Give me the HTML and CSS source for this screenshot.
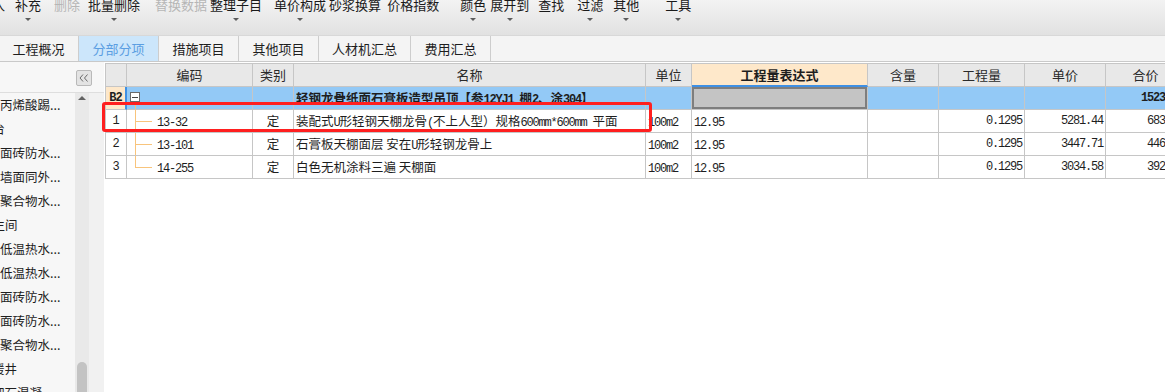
FILE: index.html
```html
<!DOCTYPE html>
<html lang="zh-CN">
<head>
    <meta charset="UTF-8">
    <title>分部分项</title>
    <link rel="stylesheet" href="styles.css">
</head>
<body>
    <div class="toolbar">
        <div class="tb-item"><span class="tb-label">入</span></div>
        <div class="tb-item"><span class="tb-label">补充</span><i class="tb-arrow"></i></div>
        <div class="tb-item disabled"><span class="tb-label">删除</span></div>
        <div class="tb-item"><span class="tb-label">批量删除</span><i class="tb-arrow"></i></div>
        <div class="tb-item disabled"><span class="tb-label">替换数据</span></div>
        <div class="tb-item"><span class="tb-label">整理子目</span><i class="tb-arrow"></i></div>
        <div class="tb-item"><span class="tb-label">单价构成</span><i class="tb-arrow"></i></div>
        <div class="tb-item"><span class="tb-label">砂浆换算</span></div>
        <div class="tb-item"><span class="tb-label">价格指数</span></div>
        <div class="tb-item"><span class="tb-label">颜色</span><i class="tb-arrow"></i></div>
        <div class="tb-item"><span class="tb-label">展开到</span><i class="tb-arrow"></i></div>
        <div class="tb-item"><span class="tb-label">查找</span></div>
        <div class="tb-item"><span class="tb-label">过滤</span><i class="tb-arrow"></i></div>
        <div class="tb-item"><span class="tb-label">其他</span><i class="tb-arrow"></i></div>
        <div class="tb-item"><span class="tb-label">工具</span><i class="tb-arrow"></i></div>
    </div>

    <div class="tabs">
        <div class="tab">工程概况</div>
        <div class="tab active">分部分项</div>
        <div class="tab">措施项目</div>
        <div class="tab">其他项目</div>
        <div class="tab wide">人材机汇总</div>
        <div class="tab">费用汇总</div>
    </div>

    <div class="main">
        <div class="side">
            <div class="side-head">
                <div class="collapse-btn">
                    <svg width="10" height="8" viewBox="0 0 10 8">
                        <path d="M4 0.5 L1 4 L4 7.5 M8.5 0.5 L5.5 4 L8.5 7.5" fill="none" stroke="#6a6a6a" stroke-width="1"/>
                    </svg>
                </div>
            </div>
            <div class="side-body">
                <div class="tree-list">
                    <div class="node">丙烯酸踢...</div>
                    <div class="node cut-2">阳台</div>
                    <div class="node">面砖防水...</div>
                    <div class="node">墙面同外...</div>
                    <div class="node">聚合物水...</div>
                    <div class="node cut-2">卫生间</div>
                    <div class="node">低温热水...</div>
                    <div class="node">低温热水...</div>
                    <div class="node">面砖防水...</div>
                    <div class="node">面砖防水...</div>
                    <div class="node">聚合物水...</div>
                    <div class="node cut-1">暖井</div>
                    <div class="node cut-1">细石混凝...</div>
                </div>
                <div class="vscroll">
                    <i class="vscroll-up"></i>
                    <div class="vscroll-thumb"></div>
                </div>
                <div class="splitter"></div>
            </div>
        </div>

        <div class="grid-wrap">
            <div class="grid">
                <!-- header -->
                <div class="cell head"></div>
                <div class="cell head">编码</div>
                <div class="cell head">类别</div>
                <div class="cell head">名称</div>
                <div class="cell head">单位</div>
                <div class="cell head expr-head">工程量表达式</div>
                <div class="cell head">含量</div>
                <div class="cell head">工程量</div>
                <div class="cell head">单价</div>
                <div class="cell head">合价</div>

                <!-- section row -->
                <div class="cell rownum section-num">B2</div>
                <div class="cell section code-root"><span class="fold-box"></span></div>
                <div class="cell section"></div>
                <div class="cell section name bold">轻钢龙骨纸面石膏板造型吊顶【参<span class="en">12YJ1 </span>棚<span class="en">2</span>、涂<span class="en">304</span>】</div>
                <div class="cell section"></div>
                <div class="cell section expr-selected"></div>
                <div class="cell section"></div>
                <div class="cell section"></div>
                <div class="cell section"></div>
                <div class="cell section num bold">1523.41</div>

                <!-- item rows -->
                <div class="cell rownum">1</div>
                <div class="cell code branch"><span class="en">13-32</span></div>
                <div class="cell type">定</div>
                <div class="cell name">装配式<span class="en">U</span>形轻钢天棚龙骨<span class="en">(</span>不上人型）规格<span class="en">600mm*600mm </span>平面</div>
                <div class="cell unit"><span class="en">100m2</span></div>
                <div class="cell expr"><span class="en">12.95</span></div>
                <div class="cell"></div>
                <div class="cell num">0.1295</div>
                <div class="cell num">5281.44</div>
                <div class="cell num">683.95</div>

                <div class="cell rownum">2</div>
                <div class="cell code branch"><span class="en">13-101</span></div>
                <div class="cell type">定</div>
                <div class="cell name">石膏板天棚面层 安在<span class="en">U</span>形轻钢龙骨上</div>
                <div class="cell unit"><span class="en">100m2</span></div>
                <div class="cell expr"><span class="en">12.95</span></div>
                <div class="cell"></div>
                <div class="cell num">0.1295</div>
                <div class="cell num">3447.71</div>
                <div class="cell num">446.48</div>

                <div class="cell rownum">3</div>
                <div class="cell code branch last"><span class="en">14-255</span></div>
                <div class="cell type">定</div>
                <div class="cell name">白色无机涂料三遍 天棚面</div>
                <div class="cell unit"><span class="en">100m2</span></div>
                <div class="cell expr"><span class="en">12.95</span></div>
                <div class="cell"></div>
                <div class="cell num">0.1295</div>
                <div class="cell num">3034.58</div>
                <div class="cell num">392.98</div>
            </div>
        </div>

        <!-- red annotation box -->
        <div class="mark"></div>
    </div>
</body>
</html>
```

FILE: styles.css
```css
* {
    box-sizing: border-box;
}

body {
    margin: 0;
    width: 1165px;
    height: 392px;
    overflow: hidden;
    font-family: "Noto Sans CJK SC", "Microsoft YaHei", sans-serif;
    font-size: 13px;
    color: #1e1e1e;
    background-color: #fff;
}

/* toolbar */
.toolbar {
    display: flex;
    align-items: flex-start;
    height: 35px;
    background: linear-gradient(#f3f3f3, #e1e1e1);
    overflow: hidden;
}

.tb-item {
    display: flex;
    flex-direction: column;
    align-items: center;
    flex-shrink: 0;
}

.tb-label {
    margin-top: -3px;
    line-height: 16px;
    white-space: nowrap;
    color: #1a1a1a;
}

.tb-item.disabled .tb-label {
    color: #b6b6b6;
}

.tb-arrow {
    margin-top: 5px;
    border-left: 3.5px solid transparent;
    border-right: 3.5px solid transparent;
    border-top: 3.5px solid #5c5c5c;
}

.tb-item:nth-child(1) { margin-left: -8px; }
.tb-item:nth-child(2) { margin-left: 10px; }
.tb-item:nth-child(3) { margin-left: 13px; }
.tb-item:nth-child(4) { margin-left: 8px; }
.tb-item:nth-child(5) { margin-left: 15px; }
.tb-item:nth-child(6) { margin-left: 3px; }
.tb-item:nth-child(7) { margin-left: 12px; }
.tb-item:nth-child(8) { margin-left: 3px; }
.tb-item:nth-child(9) { margin-left: 6px; }
.tb-item:nth-child(10) { margin-left: 21px; }
.tb-item:nth-child(11) { margin-left: 4px; }
.tb-item:nth-child(12) { margin-left: 9px; }
.tb-item:nth-child(13) { margin-left: 13px; }
.tb-item:nth-child(14) { margin-left: 10px; }
.tb-item:nth-child(15) { margin-left: 26px; }

/* tabs */
.tabs {
    display: flex;
    height: 27px;
    margin-left: -1px;
    background-color: #f4f4f4;
    border-top: 1px solid #d8d8d8;
    border-bottom: 1px solid #c9c9c9;
}

.tab {
    width: 80px;
    border-right: 1px solid #cdcdcd;
    text-align: center;
    line-height: 26px;
    color: #1e1e1e;
}

.tab.wide {
    width: 92px;
}

.tab.active {
    background-color: #cce6fb;
    color: #5b9ee2;
}

/* main area */
.main {
    position: relative;
    display: flex;
    height: 330px;
}

.side {
    display: flex;
    flex-direction: column;
    width: 104px;
    flex-shrink: 0;
    background-color: #f7f7f7;
}

.side-head {
    display: flex;
    justify-content: flex-end;
    height: 31px;
    padding: 8px 12px 0 0;
    border-bottom: 1px solid #dedede;
}

.collapse-btn {
    display: flex;
    align-items: center;
    justify-content: center;
    width: 16px;
    height: 16px;
    background-color: #e3e3e3;
    border: 1px solid #b9b9b9;
    border-radius: 2px;
}

.side-body {
    display: flex;
    flex: 1;
    overflow: hidden;
}

.tree-list {
    width: 75px;
    overflow: hidden;
}

.node {
    height: 24px;
    line-height: 24px;
    white-space: nowrap;
    font-size: 12.5px;
    color: #1e1e1e;
}

.node.cut-1 {
    text-indent: -8px;
}

.node.cut-2 {
    text-indent: -20px;
}

.vscroll {
    display: flex;
    flex-direction: column;
    align-items: center;
    width: 14px;
    background-color: #e9e9e9;
}

.vscroll-up {
    margin-top: 3px;
    border-left: 4px solid transparent;
    border-right: 4px solid transparent;
    border-bottom: 4px solid #626262;
}

.vscroll-thumb {
    width: 10px;
    height: 40px;
    margin-top: auto;
    margin-bottom: -10px;
    background-color: #c3c3c3;
    border-radius: 5px;
}

.splitter {
    width: 15px;
    background-color: #f1f1f1;
}

/* data grid */
.grid-wrap {
    flex: 1;
    padding: 1px 0 0 1px;
    overflow: hidden;
    background-color: #fff;
}

.grid {
    display: grid;
    grid-template-columns: 21px 126px 41px 352px 46px 176px 71px 86px 81px 80px;
    grid-auto-rows: 23px;
    width: 1081px;
    border-top: 1px solid #c6c6c6;
    border-left: 1px solid #c6c6c6;
    font-size: 12.5px;
}

.cell {
    padding: 0 3px;
    border-right: 1px solid #c6c6c6;
    border-bottom: 1px solid #c6c6c6;
    line-height: 22px;
    white-space: nowrap;
    overflow: hidden;
}

.head {
    background-color: #e8e8e8;
    text-align: center;
    font-size: 13px;
    color: #2a2a2a;
}

.expr-head {
    background-color: #fee8ca;
    border-bottom: 2px solid #3f90e4;
    font-weight: bold;
    color: #1e1e1e;
}

.en {
    font-family: "Liberation Mono", monospace;
    font-size: 12px;
    letter-spacing: -1.2px;
}

.rownum {
    text-align: center;
    font-family: "Liberation Mono", monospace;
    font-size: 12px;
}

.section {
    background-color: #93c9f6;
}

.section-num {
    background-color: #fee8ca;
    border-right: 2px solid #3f90e4;
    font-weight: bold;
    letter-spacing: -1px;
}

.bold {
    font-weight: bold;
}

.name {
    padding-left: 2px;
}

.type {
    text-align: center;
}

.unit {
    padding-left: 2px;
}

.expr {
    padding-left: 2px;
}

.num {
    text-align: right;
    font-family: "Liberation Mono", monospace;
    font-size: 12px;
    letter-spacing: -1.2px;
    padding-right: 2px;
}

.expr-selected {
    background-color: #c4c4c4;
    box-shadow: inset 0 0 0 2px #7e7e7e;
}

/* tree lines in the code column */
.code-root {
    position: relative;
    padding-left: 3px;
}

.fold-box {
    display: inline-block;
    width: 10px;
    height: 10px;
    margin-top: 5px;
    vertical-align: top;
    background: linear-gradient(#444, #444) center / 6px 1px no-repeat, #fff;
    border: 1px solid #6a6a6a;
}

.code-root::after {
    content: "";
    position: absolute;
    left: 8px;
    top: 15px;
    bottom: -1px;
    width: 1px;
    background-color: #f8c47c;
}

.branch {
    position: relative;
    padding-left: 30px;
}

.branch::before {
    content: "";
    position: absolute;
    left: 8px;
    top: 0;
    bottom: -1px;
    width: 1px;
    background-color: #f8c47c;
}

.branch.last::before {
    bottom: 50%;
}

.branch::after {
    content: "";
    position: absolute;
    left: 8px;
    top: 11px;
    width: 17px;
    height: 1px;
    background-color: #f8c47c;
}

/* red note frame */
.mark {
    position: absolute;
    left: 102px;
    top: 40px;
    width: 550px;
    height: 30px;
    border: 3px solid #ff1f1f;
    border-radius: 3px;
}
```
